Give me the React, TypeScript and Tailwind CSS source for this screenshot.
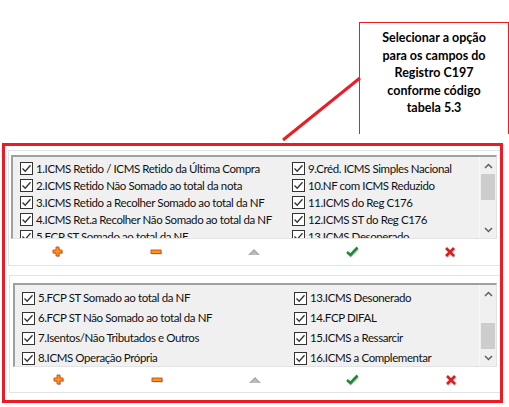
import React from "react";

const topLeft = [
  "1.ICMS Retido / ICMS Retido da Última Compra",
  "2.ICMS Retido Não Somado ao total da nota",
  "3.ICMS Retido a Recolher Somado ao total da NF",
  "4.ICMS Ret.a Recolher Não Somado ao total da NF",
  "5.FCP ST Somado ao total da NF",
];
const topRight = [
  "9.Créd. ICMS Simples Nacional",
  "10.NF com ICMS Reduzido",
  "11.ICMS do Reg C176",
  "12.ICMS ST do Reg C176",
  "13.ICMS Desonerado",
];
const bottomLeft = [
  "5.FCP ST Somado ao total da NF",
  "6.FCP ST Não Somado ao total da NF",
  "7.Isentos/Não Tributados e Outros",
  "8.ICMS Operação Própria",
];
const bottomRight = [
  "13.ICMS Desonerado",
  "14.FCP DIFAL",
  "15.ICMS a Ressarcir",
  "16.ICMS a Complementar",
];

function CheckBox() {
  return (
    <span className="w-[13px] h-[13px] border border-[#333] bg-white flex items-center justify-center shrink-0">
      <svg width="11" height="11" viewBox="0 0 11 11">
        <path d="M1.5 5.5 L4.2 8.3 L9.5 2.3" fill="none" stroke="#333" strokeWidth="1.3" />
      </svg>
    </span>
  );
}

function Chevron({ down }: { down?: boolean }) {
  return (
    <svg width="9" height="6" viewBox="0 0 9 6">
      <path
        d={down ? "M1 1 L4.5 4.5 L8 1" : "M1 5 L4.5 1.5 L8 5"}
        fill="none"
        stroke="#606060"
        strokeWidth="1.5"
      />
    </svg>
  );
}

function ListBox({
  left,
  right,
  rowH,
  padTop,
  thumbTop,
}: {
  left: string[];
  right: string[];
  rowH: string;
  padTop: string;
  thumbTop: string;
}) {
  return (
    <div className="h-[84px] flex bg-[#f0f0f0] border-t-2 border-l-2 border-t-[#a0a0a0] border-l-[#a0a0a0] border-r border-b border-r-[#e3e3e3] border-b-[#e3e3e3] overflow-hidden">
      <div className={`flex-1 overflow-hidden pl-[7px] ${padTop}`}>
        {left.map((l, i) => (
          <div key={i} className={`grid grid-cols-[272px_1fr] ${rowH}`}>
            <div className="flex items-center gap-[3px] whitespace-nowrap">
              <CheckBox />
              <span>{l}</span>
            </div>
            <div className="flex items-center gap-[3px] whitespace-nowrap">
              <CheckBox />
              <span>{right[i]}</span>
            </div>
          </div>
        ))}
      </div>
      <div className="w-[17px] flex flex-col border-l border-[#f8f8f8]">
        <div className="h-[17px] flex items-center justify-center">
          <Chevron />
        </div>
        <div className="flex-1 px-[1px]">
          <div className={`h-[26px] bg-[#cdcdcd] ${thumbTop}`} />
        </div>
        <div className="h-[17px] flex items-center justify-center">
          <Chevron down />
        </div>
      </div>
    </div>
  );
}

function Buttons() {
  return (
    <div className="flex-1 grid grid-cols-5 items-center">
      <div className="flex justify-center">
        <svg width="14" height="12" viewBox="0 0 14 12">
          <path d="M6 2h3v3h3v3H9v3H6V8H3V5h3z" fill="#c8c8c8" />
          <path d="M5 1h3v3h3v3H8v3H5V7H2V4h3z" fill="#f7941d" stroke="#d4461a" strokeWidth="0.9" />
        </svg>
      </div>
      <div className="flex justify-center">
        <svg width="14" height="8" viewBox="0 0 14 8">
          <rect x="3" y="3" width="10" height="3.5" fill="#c8c8c8" />
          <rect x="2" y="2" width="10" height="3.5" fill="#f7941d" stroke="#d4461a" strokeWidth="0.9" />
        </svg>
      </div>
      <div className="flex justify-center">
        <svg width="14" height="8" viewBox="0 0 14 8">
          <path d="M1 7 L7 1 L13 7 Z" fill="#a8a8a8" />
          <path d="M3 7 L7 3 L11 7 Z" fill="#bdbdbd" />
        </svg>
      </div>
      <div className="flex justify-center">
        <svg width="14" height="12" viewBox="0 0 14 12">
          <path d="M2 7 L5 10 L12 3" fill="none" stroke="#c8c8c8" strokeWidth="2.6" />
          <path d="M1 6 L4.5 9 L11.5 1.5" fill="none" stroke="#1f8a3a" strokeWidth="2.6" />
        </svg>
      </div>
      <div className="flex justify-center">
        <svg width="13" height="12" viewBox="0 0 13 12">
          <path d="M3 3 L11 11 M11 3 L3 11" stroke="#c8c8c8" strokeWidth="2.6" />
          <path d="M2 2 L10 10 M10 2 L2 10" stroke="#d81e1e" strokeWidth="2.6" />
        </svg>
      </div>
    </div>
  );
}

export default function App() {
  return (
    <div
      className="relative w-[509px] h-[407px] bg-white overflow-hidden text-[11.5px] tracking-[-0.4px] text-[#111]"
      style={{ fontFamily: "Lato, sans-serif" }}
    >
      <div className="ml-[2px] mt-[143px] w-[501px] h-[260px] border-[3px] border-[#ed1c24] flex flex-col">
        <div className="mt-[4px] ml-[3px] h-[116px] border-l border-t border-b border-[#e3e3e3] flex flex-col">
          <div className="mt-[4px] ml-[2px] mr-[3px]">
            <ListBox left={topLeft} right={topRight} rowH="h-[17px]" padTop="pt-[3px]" thumbTop="mt-0" />
          </div>
          <Buttons />
        </div>
        <div className="mt-[9px] ml-[4px] h-[118px] border-l border-t border-b border-[#e3e3e3] flex flex-col">
          <div className="mt-[7px] ml-[3px] mr-[3px]">
            <ListBox left={bottomLeft} right={bottomRight} rowH="h-[20px]" padTop="pt-[3px]" thumbTop="mt-[21px]" />
          </div>
          <Buttons />
        </div>
      </div>

      <div className="absolute left-[359px] top-[22px] w-[150px] h-[112px] border-l border-t border-r border-[#ed1c24] pt-[6px] text-center font-bold text-[12.5px] tracking-normal leading-[17.5px] text-black">
        Selecionar a opção
        <br />
        para os campos do
        <br />
        Registro C197
        <br />
        conforme código
        <br />
        tabela 5.3
      </div>
      <svg className="absolute left-0 top-0" width="509" height="160">
        <line x1="283" y1="140" x2="360" y2="78" stroke="#ed1c24" strokeWidth="3" />
      </svg>
    </div>
  );
}
